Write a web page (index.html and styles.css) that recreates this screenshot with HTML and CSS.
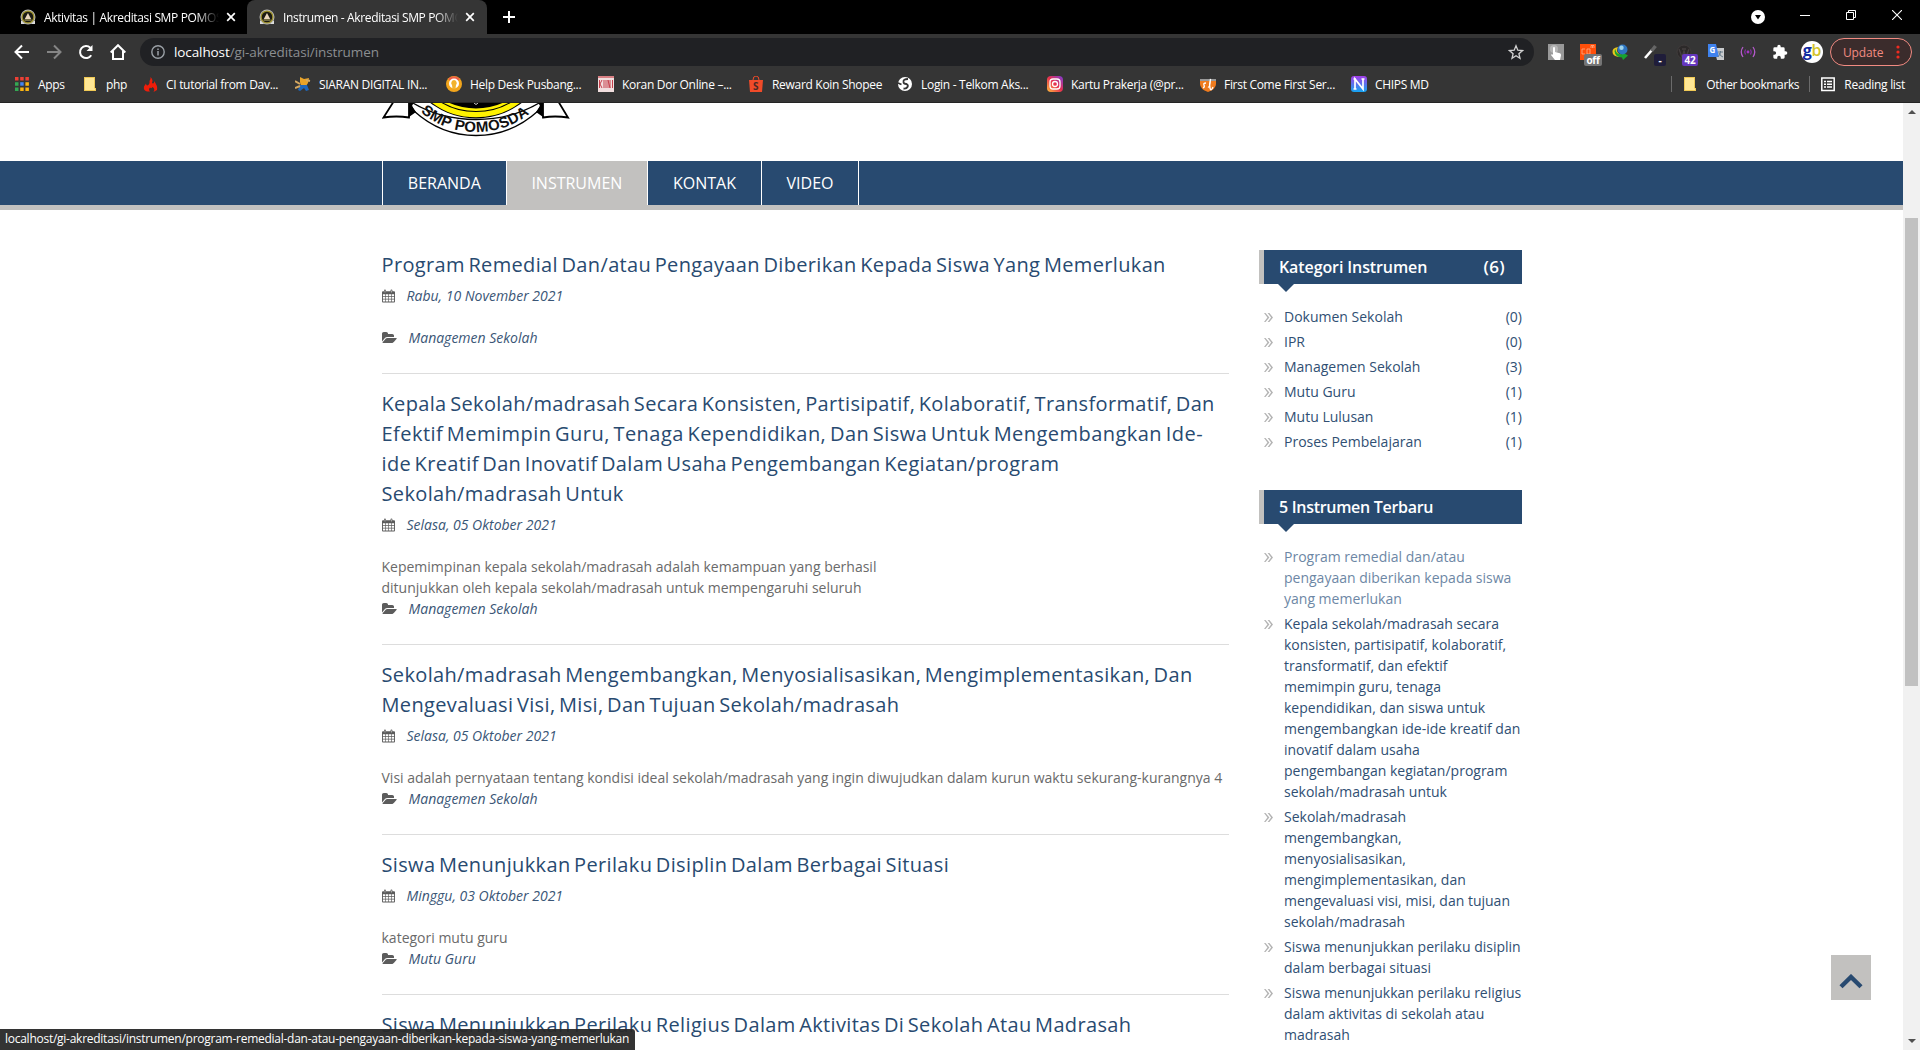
FILE: index.html
```html
<!DOCTYPE html>
<html lang="id">
<head>
<meta charset="utf-8">
<title>Instrumen - Akreditasi SMP POMOSDA</title>
<link rel="stylesheet" href="styles.css">
</head>
<body>
<svg class="defs" aria-hidden="true">
  <symbol id="calendar" viewBox="0 0 14 14"><path fill="#5c5c5c" fill-rule="evenodd" d="M1 2h1.2V.9Q2.2 0 3.2 0t1 .9V2h5V.9q0-.9 1-.9t1 .9V2H13q1 0 1 1v10q0 1-1 1H1q-1 0-1-1V3q0-1 1-1zM1 5v2h2.300V5zm3 0v2h2.600V5zm3.300 0v2h2.600V5zm3.300 0v2H13V5zM1 7.700V10h2.300V7.700zm3 0V10h2.600V7.700zm3.300 0V10h2.600V7.700zm3.300 0V10H13V7.700zM1 10.700V13h2.300v-2.300zm3 0V13h2.600v-2.300zm3.300 0V13h2.600v-2.300zm3.300 0V13H13v-2.300z"/><path d="M3.200 1v2.200M10.200 1v2.200" stroke="#ddd" stroke-width=".7"/></symbol>
  <symbol id="folder" viewBox="0 128 1920 1536"><path fill="#5c5c5c" d="M1879 952q0 31-31 66l-336 396q-43 51-120.500 86.500t-143.500 35.500h-1088q-34 0-60.500-13t-26.500-43q0-31 31-66l336-396q43-51 120.500-86.500t143.500-35.500h1088q34 0 60.500 13t26.500 43zm-343-344v160h-832q-94 0-197 47.500t-164 119.500l-337 396-5 6q0-4-.5-12.500t-.5-12.500v-960q0-92 66-158t158-66h320q92 0 158 66t66 158v32h544q92 0 158 66t66 158z"/></symbol>
  <symbol id="crest" viewBox="0 0 16 16"><path d="M1 12l2-1 2 4H1zM15 12l-2-1-2 4h4z" fill="#ddd"/><circle cx="8" cy="8" r="7.500" fill="#bbb"/><circle cx="8" cy="8" r="5.900" fill="#1b1a12" stroke="#9b8f2c" stroke-width="1.300"/><path d="M8 4l3.200 6H4.800z" fill="#e9d6bd"/><path d="M4.500 11h7" stroke="#c9bd74"/></symbol>
  <symbol id="note" viewBox="0 0 16 16"><path d="M2 1h11v11h1v3H2z" fill="#f0c955"/><path d="M3 2h9v10l1 1v1H3z" fill="#ffe794"/></symbol>
  <symbol id="close" viewBox="0 0 10 10"><path d="M1.200 1.200l7.600 7.600M8.800 1.200L1.200 8.800" stroke="currentColor" stroke-width="1.700"/></symbol>
</svg>

<header class="browser">
  <div class="tabstrip">
    <div class="tab"><svg class="i16"><use href="#crest"/></svg><span class="tab-title">Aktivitas | Akreditasi SMP POMOSDA</span><svg class="i10"><use href="#close"/></svg></div>
    <div class="tab active"><svg class="i16"><use href="#crest"/></svg><span class="tab-title">Instrumen - Akreditasi SMP POMOSDA</span><svg class="i10"><use href="#close"/></svg></div>
    <svg class="newtab" viewBox="0 0 12 12"><path d="M6 0v12M0 6h12" stroke="#fff" stroke-width="2"/></svg>
    <div class="window-buttons">
      <svg viewBox="0 0 14 14" class="i14"><circle cx="7" cy="7" r="7" fill="#fff"/><path d="M4 5h6L7 9.500z" fill="#000"/></svg>
      <svg viewBox="0 0 10 10"><path d="M0 5.500h10" stroke="#fff"/></svg>
      <svg viewBox="0 0 10 10"><path d="M.5 2.500h7v7h-7zM2.500 2.500v-2h7v7h-2" fill="none" stroke="#fff"/></svg>
      <svg viewBox="0 0 10 10"><path d="M0 0l10 10M10 0L0 10" stroke="#fff" stroke-width="1.100"/></svg>
    </div>
  </div>
  <div class="toolbar">
    <div class="nav-icons">
      <svg viewBox="0 0 16 16"><path d="M15 8H2M8 1.500L1.500 8 8 14.500" fill="none" stroke="#fff" stroke-width="2"/></svg>
      <svg viewBox="0 0 16 16"><path d="M1 8h13M8 1.500L14.500 8 8 14.500" fill="none" stroke="#858585" stroke-width="2"/></svg>
      <svg viewBox="0 0 16 16"><path d="M13.200 11.200A6 6 0 1 1 12.300 3.800" fill="none" stroke="#fff" stroke-width="2"/><path d="M14.500 1v6h-6z" fill="#fff"/></svg>
      <svg viewBox="0 0 16 16"><path d="M.7 8.500L8 1.200l7.300 7.300M3 7v8h10V7" fill="none" stroke="#fff" stroke-width="2"/></svg>
    </div>
    <div class="omnibox">
      <svg viewBox="0 0 14 14" class="i14"><circle cx="7" cy="7" r="6.200" fill="none" stroke="#9aa0a6" stroke-width="1.400"/><path d="M7 6v4.500M7 3.400v1.500" stroke="#9aa0a6" stroke-width="1.500"/></svg>
      <span class="url"><b>localhost</b>/gi-akreditasi/instrumen</span>
      <svg viewBox="0 0 16 16" class="i16"><path d="M8 1.800l1.800 4.400 4.700.4-3.600 3.100 1.100 4.600L8 11.800l-4 2.500 1.100-4.600-3.600-3.100 4.700-.4z" fill="none" stroke="#d2d2d2" stroke-width="1.300"/></svg>
    </div>
    <div class="extensions">
      <span class="ext"><svg viewBox="0 0 16 16"><path fill="#999" d="M0 0h16v16H0z"/><circle cx="6" cy="5" r="4" fill="#b6b6b6"/><path d="M5 3.500q1-1 2 0V8l5 1.200q1 .5 1 2L12 16H7l-4-5 1-1 1 1z" fill="#fff"/></svg></span>
      <span class="ext"><svg viewBox="0 0 16 16"><path fill="#ff4f0a" d="M0 0h16v16H0z"/><path d="M5 5H2v5h3M7 5v5h3V5zM11 4V1.500h1.500V4m0-2.500H14V4" fill="none" stroke="#ffb08a" stroke-width=".8"/></svg><i class="badge off">off</i></span>
      <span class="ext"><svg viewBox="0 0 16 16"><path d="M6 3Q0 4 .5 8q0 4 6 5l3-2Q3 9 6 3z" fill="#e8c51c"/><path d="M3.500 5q0 5 6 5.500V8l6.500 3.500-5 4.500-1-2.500Q3 13 2.500 7z" fill="#18a32f"/><circle cx="10.500" cy="5.500" r="5" fill="#2d74c0"/><circle cx="9.500" cy="3.700" r="2.200" fill="#9dd2ea"/></svg></span>
      <span class="ext"><svg viewBox="0 0 16 16"><path d="M1 14L8 6" stroke="#fff" stroke-width="2.600"/><path d="M7.500 7l4-5" stroke="#666" stroke-width="3.500"/></svg><i class="badge dash">-</i></span>
      <span class="ext"><svg viewBox="0 0 16 16"><circle cx="8" cy="8" r="7" fill="#2c2929" stroke="#3f3b3b"/><path d="M3 5l3 8 2-6 2 6 3-8M6 5h4" fill="none" stroke="#454040" stroke-width="1.300"/></svg><i class="badge count">42</i></span>
      <span class="ext"><svg viewBox="0 0 16 16"><path fill="#c9cbcd" d="M6 4h10v12H9z"/><path fill="#3f82ee" d="M0 0h8l3 13H0z"/><text x="1.500" y="9" font-size="8" font-weight="700" fill="#fff">G</text><path d="M10 8h5M12.500 7v1q0 3-3 5M11 9q1 3 4 4" stroke="#667b89" fill="none"/></svg></span>
      <span class="ext"><svg viewBox="0 0 16 16"><circle cx="8" cy="8" r="1.400" fill="#a436c4"/><path d="M3 3Q-.5 8 3 13M13 3q3.500 5 0 10" fill="none" stroke="#b45bcb" stroke-width="1.300"/><path d="M5.500 5.500q-1.600 2.500 0 5M10.500 5.500q1.600 2.500 0 5" fill="none" stroke="#8d2bae" stroke-width="1.200"/></svg></span>
      <span class="ext"><svg viewBox="0 0 24 24"><path fill="#fff" d="M20.500 11H19V7a2 2 0 0 0-2-2h-4V3.500a2.500 2.500 0 0 0-5 0V5H4a2 2 0 0 0-2 2v3.800h1.500a2.700 2.700 0 0 1 0 5.400H2V20a2 2 0 0 0 2 2h3.800v-1.500a2.700 2.700 0 0 1 5.400 0V22H17a2 2 0 0 0 2-2v-4h1.500a2.500 2.500 0 0 0 0-5z"/></svg></span>
    </div>
    <span class="avatar"><b>g</b><em>b</em></span>
    <span class="update">Update<svg viewBox="0 0 4 14"><g fill="#f02b20"><circle cx="2" cy="2" r="1.600"/><circle cx="2" cy="7" r="1.600"/><circle cx="2" cy="12" r="1.600"/></g></svg></span>
  </div>
  <nav class="bookmarks">
    <div class="saved">
      <span class="bm"><svg viewBox="0 0 16 16"><path d="M1 1h3.500v3.500H1zM6.200 1h3.500v3.500H6.200zM11.400 1h3.500v3.500h-3.500z" fill="#ee4035"/><path d="M1 6.200h3.500v3.500H1zM1 11.400h3.500v3.500H1z" fill="#34a853"/><path d="M6.200 6.200h3.500v3.500H6.200z" fill="#4285f4"/><path d="M11.400 6.200h3.500v3.500h-3.500zM6.200 11.400h3.500v3.500H6.200zM11.400 11.400h3.500v3.500h-3.500z" fill="#fbb512"/></svg>Apps</span>
      <span class="bm"><svg><use href="#note"/></svg>php</span>
      <span class="bm"><svg viewBox="0 0 16 16"><path fill="#ef1d0a" d="M8.500 1q3 3 1.500 5.500.5 1.500 2 .5V5q4 5 3 9l-3.500 2q2-3-1-5-1 2-2.500.5-2 2 0 4H5q-4-1-3-5l2-3q0 2 1.500 2Q8 8 7.500 5 9 3 8.500 1z"/></svg>CI tutorial from Dav...</span>
      <span class="bm"><svg viewBox="0 0 16 16"><path d="M5 1l4 2 5-1-1 5-2 3H6L5 6z" fill="#e8a329"/><path d="M5 9h7l2 5-3 1-2-3-4 3-2-1z" fill="#1d67bd"/><path d="M0 5l5 3M0 12l5-2M11 4l4 1" stroke="#d4a760" stroke-width="2"/></svg>SIARAN DIGITAL IN...</span>
      <span class="bm"><svg viewBox="0 0 16 16"><circle cx="8" cy="8" r="8" fill="#f2a51c"/><path d="M2 3a8 8 0 0 1 12 0L8 8z" fill="#ee6048"/><circle cx="8" cy="7.500" r="5" fill="#fff"/><path d="M8 4a3 3 0 0 1 2 5l-.5 4h-3L6 9a3 3 0 0 1 2-5z" fill="#f2b32e"/></svg>Help Desk Pusbang...</span>
      <span class="bm"><svg viewBox="0 0 16 16"><path fill="#f1dede" d="M0 0h16v16H0z"/><path d="M0 1h16" stroke="#d98084" stroke-width="2"/><path d="M1.500 4v8M4 4L2 8l2 4M6 4v8M8 4v8M10 12V4l2 8V4M14.500 4v8" stroke="#c5404b" fill="none"/></svg>Koran Dor Online –...</span>
      <span class="bm"><svg viewBox="0 0 16 16"><path d="M1 4h14l-1 12H2z" fill="#f04b29"/><path d="M5 4q0-4 3-4t3 4" fill="none" stroke="#f04b29"/><text x="5" y="14" font-size="10" font-weight="700" fill="#4a2925">S</text></svg>Reward Koin Shopee</span>
      <span class="bm"><svg viewBox="0 0 16 16"><circle cx="8" cy="8" r="7" fill="#fff"/><path d="M11 3Q6 3 6.500 6q0 2 3 2 2 1 1 3t-4 1.500M1 7l3.500 1.500" fill="none" stroke="#333" stroke-width="1.800"/></svg>Login - Telkom Aks...</span>
      <span class="bm"><svg viewBox="0 0 16 16"><defs><linearGradient id="ig" x1="0" y1="1" x2="1" y2="0"><stop stop-color="#ffbf3b"/><stop offset=".5" stop-color="#e8314f"/><stop offset="1" stop-color="#7a3ad8"/></linearGradient></defs><rect width="16" height="16" rx="4" fill="url(#ig)"/><rect x="3" y="3" width="10" height="10" rx="3" fill="none" stroke="#fff" stroke-width="1.300"/><circle cx="8" cy="8" r="2.500" fill="none" stroke="#fff" stroke-width="1.300"/></svg>Kartu Prakerja (@pr...</span>
      <span class="bm"><svg viewBox="0 0 16 16"><path d="M0 5h16v3q0 5-8 8-8-3-8-8z" fill="#ef7b1e"/><path d="M0 4h16" stroke="#ddd" stroke-width="1.200"/><path d="M6 7q-3 0-2 2t-1 3M8 11q2 1 2.500-8Q9 8 10 12t3-1" fill="none" stroke="#fff" stroke-width="1.300"/></svg>First Come First Ser...</span>
      <span class="bm"><svg viewBox="0 0 16 16"><defs><linearGradient id="nb" x2="0" y2="1"><stop stop-color="#a33de8"/><stop offset="1" stop-color="#14a5f1"/></linearGradient></defs><rect width="16" height="16" rx="3" fill="url(#nb)"/><path d="M4 13V3l8 10V3M2.500 3H5M2.500 13h3M10.500 3h3" fill="none" stroke="#fff" stroke-width="1.700"/></svg>CHIPS MD</span>
    </div>
    <div class="side-links">
      <span class="bm other"><svg><use href="#note"/></svg>Other bookmarks</span>
      <span class="bm reading"><svg viewBox="0 0 16 16"><path d="M1.800 2h12.400v12.400H1.800z" fill="none" stroke="#fff" stroke-width="1.500"/><path d="M4 5.500h2M7 5.500h5M4 8.200h2M7 8.200h5M4 11h2M7 11h5" stroke="#fff" stroke-width="1.500"/></svg>Reading list</span>
    </div>
  </nav>
</header>

<div class="viewport">
  <div class="page">
    <div class="masthead">
      <svg class="logo" viewBox="382 103 188 34">
        <ellipse cx="476" cy="43.500" rx="75" ry="75" fill="#000"/>
        <circle cx="476" cy="43.500" r="71.200" fill="none" stroke="#fff200" stroke-width="5.200"/>
        <circle cx="476" cy="43.500" r="66.200" fill="none" stroke="#fff200" stroke-width="2.600"/>
        <path d="M474 103l2 1.500 2-1.500" fill="none" stroke="#fff" stroke-width=".8"/>
        <path d="M408 100Q438 119.500 476 119.500T544 100L538 111Q511 135.500 476 135.500T414 111z" fill="#fff" stroke="#000" stroke-width="1.300"/>
        <path d="M394 101l-10.500 16.500q13-2 25.500 0V101M558 101l10 16.500q-13-2-25 0V101" fill="#fff" stroke="#000" stroke-width="1.800"/>
        <path d="M409 101v16l7-5-4-6 2-4zM543 101v16l-7-5 4-6-2-4z" fill="#000"/>
        <path id="ribbon" d="M419 110.500Q443 132 476 132T533 110.500" fill="none"/>
        <text class="logo-text" textLength="118" lengthAdjust="spacing"><textPath href="#ribbon" startOffset="2">SMP POMOSDA</textPath></text>
      </svg>
    </div>
    <nav class="menu"><a>BERANDA</a><a class="current">INSTRUMEN</a><a>KONTAK</a><a>VIDEO</a></nav>
    <div class="columns">
      <main>
        <article><h2>Program Remedial Dan/atau Pengayaan Diberikan Kepada Siswa Yang Memerlukan</h2>
          <p class="meta date"><svg><use href="#calendar"/></svg>Rabu, 10 November 2021</p>
          <p class="meta cat"><svg><use href="#folder"/></svg>Managemen Sekolah</p></article>
        <article><h2>Kepala Sekolah/madrasah Secara Konsisten, Partisipatif, Kolaboratif, Transformatif, Dan<br><span class="wide">Efektif Memimpin Guru, Tenaga Kependidikan, Dan Siswa Untuk Mengembangkan Ide-</span><br>ide Kreatif Dan Inovatif Dalam Usaha Pengembangan Kegiatan/program<br>Sekolah/madrasah Untuk</h2>
          <p class="meta date"><svg><use href="#calendar"/></svg>Selasa, 05 Oktober 2021</p>
          <p>Kepemimpinan kepala sekolah/madrasah adalah kemampuan yang berhasil<br>ditunjukkan oleh kepala sekolah/madrasah untuk mempengaruhi seluruh</p>
          <p class="meta cat"><svg><use href="#folder"/></svg>Managemen Sekolah</p></article>
        <article><h2>Sekolah/madrasah Mengembangkan, Menyosialisasikan, Mengimplementasikan, Dan<br>Mengevaluasi Visi, Misi, Dan Tujuan Sekolah/madrasah</h2>
          <p class="meta date"><svg><use href="#calendar"/></svg>Selasa, 05 Oktober 2021</p>
          <p>Visi adalah pernyataan tentang kondisi ideal sekolah/madrasah yang ingin diwujudkan dalam kurun waktu sekurang-kurangnya 4</p>
          <p class="meta cat"><svg><use href="#folder"/></svg>Managemen Sekolah</p></article>
        <article><h2>Siswa Menunjukkan Perilaku Disiplin Dalam Berbagai Situasi</h2>
          <p class="meta date"><svg><use href="#calendar"/></svg>Minggu, 03 Oktober 2021</p>
          <p>kategori mutu guru</p>
          <p class="meta cat"><svg><use href="#folder"/></svg>Mutu Guru</p></article>
        <article><h2>Siswa Menunjukkan Perilaku Religius Dalam Aktivitas Di Sekolah Atau Madrasah</h2></article>
      </main>
      <aside>
        <section class="widget"><h3>Kategori Instrumen <span>(6)</span></h3>
          <ul>
            <li>Dokumen Sekolah<span>(0)</span></li><li>IPR<span>(0)</span></li><li>Managemen Sekolah<span>(3)</span></li><li>Mutu Guru<span>(1)</span></li><li>Mutu Lulusan<span>(1)</span></li><li>Proses Pembelajaran<span>(1)</span></li>
          </ul></section>
        <section class="widget"><h3 class="tight">5 Instrumen Terbaru</h3>
          <ul>
            <li class="hover">Program remedial dan/atau<br>pengayaan diberikan kepada siswa<br>yang memerlukan</li>
            <li>Kepala sekolah/madrasah secara<br>konsisten, partisipatif, kolaboratif,<br>transformatif, dan efektif<br>memimpin guru, tenaga<br>kependidikan, dan siswa untuk<br>mengembangkan ide-ide kreatif dan<br>inovatif dalam usaha<br>pengembangan kegiatan/program<br>sekolah/madrasah untuk</li>
            <li>Sekolah/madrasah<br>mengembangkan,<br>menyosialisasikan,<br>mengimplementasikan, dan<br>mengevaluasi visi, misi, dan tujuan<br>sekolah/madrasah</li>
            <li>Siswa menunjukkan perilaku disiplin<br>dalam berbagai situasi</li>
            <li>Siswa menunjukkan perilaku religius<br>dalam aktivitas di sekolah atau<br>madrasah</li>
          </ul></section>
      </aside>
    </div>
  </div>
  <div class="scrollbar"><svg viewBox="0 0 8 4"><path d="M0 4l4-4 4 4z" fill="#505050"/></svg><div class="thumb"></div><svg class="down" viewBox="0 0 8 4"><path d="M0 0l4 4 4-4z" fill="#505050"/></svg></div>
</div>
<div class="to-top"><svg viewBox="0 0 24 15"><path d="M2 12.800L12 3l10 9.800" fill="none" stroke="#284a70" stroke-width="4.400"/></svg></div>
<div class="status">localhost/gi-akreditasi/instrumen/program-remedial-dan-atau-pengayaan-diberikan-kepada-siswa-yang-memerlukan</div>
</body>
</html>
```
FILE: styles.css
```css
* { box-sizing: border-box; }
html, body { height: 100%; }
body { margin: 0; overflow: hidden; display: flex; flex-direction: column; background: #fff; font: 14px/21px "Open Sans", "Noto Sans", sans-serif; color: #6a6a6a; }
h2, h3, p, ul { margin: 0; padding: 0; }
svg { flex: none; display: block; }
.defs { position: absolute; width: 0; height: 0; }
.i16 { width: 16px; height: 16px; }
.i14 { width: 14px; height: 14px; }
.i10 { width: 10px; height: 10px; }

/* browser frame */
.browser { flex: none; height: 103px; background: #353535; border-bottom: 1px solid #242424; color: #fff; font-size: 12px; letter-spacing: -.3px; }
.tabstrip { height: 34px; background: #000; display: flex; align-items: center; }
.tab { width: 247px; height: 34px; display: flex; align-items: center; padding: 0 11px 0 20px; gap: 7px; }
.tab.active { width: 240px; padding-left: 12px; background: #353535; border-radius: 8px 8px 0 0; }
.tab-title { width: 176px; padding-left: 1px; letter-spacing: -.35px; overflow: hidden; white-space: nowrap; mask-image: linear-gradient(90deg, #000 87%, transparent); }
.newtab { width: 12px; height: 12px; margin-left: 16px; }
.window-buttons { margin-left: auto; padding-right: 18px; display: flex; align-items: center; gap: 36px; }
.window-buttons svg { width: 10px; height: 10px; margin-bottom: 5px; }
.window-buttons .i14 { width: 14px; height: 14px; margin: 0 -1px 0 0; }
.toolbar { height: 36px; display: flex; align-items: center; }
.nav-icons { width: 140px; padding-left: 14px; display: flex; gap: 16px; }
.nav-icons svg { width: 16px; height: 16px; }
.omnibox { width: 1394px; height: 28px; border-radius: 14px; background: #202124; display: flex; align-items: center; padding: 0 10px 0 11px; }
.url { flex: 1; margin-left: 9px; font-size: 13.5px; letter-spacing: -.1px; color: #8b8e91; }
.url b { font-weight: 400; color: #fff; }
.extensions { display: flex; gap: 16px; margin-left: 14px; }
.ext { position: relative; width: 16px; height: 16px; }
.ext svg { width: 16px; height: 16px; }
.badge { position: absolute; left: 4px; top: 10px; height: 12px; line-height: 12px; font-size: 10px; font-style: normal; font-weight: 700; text-align: center; border-radius: 2px; }
.off { width: 18px; background: #757575; }
.dash { width: 12px; left: 10px; background: #1f1d3a; }
.count { width: 16px; left: 6px; background: #6437bd; }
.avatar { width: 22px; height: 22px; margin-left: 13px; border-radius: 50%; background: #fff; display: flex; justify-content: center; font-size: 16px; line-height: 18px; }
.avatar b { color: #102aa0; }
.avatar em { color: #d3c52c; font-style: normal; font-weight: 600; }
.update { width: 82px; height: 28px; margin-left: 7px; border: 1px solid #f28b82; border-radius: 14px; background: #3b2c2c; color: #f28b82; display: flex; align-items: center; justify-content: space-between; padding: 0 11px 0 12px; letter-spacing: -.15px; }
.update svg { width: 4px; height: 14px; }
.bookmarks { display: flex; justify-content: space-between; height: 28px; align-items: center; padding: 0 14px; }
.saved { display: grid; grid-template-columns: 68px 60px 153px 151px 152px 150px 149px 150px 153px 151px auto; }
.bm { display: flex; align-items: center; gap: 8px; white-space: nowrap; }
.bm svg { width: 16px; height: 16px; }
.side-links { display: flex; }
.other, .reading { border-left: 1px solid #6b6b6b; height: 16px; }
.other { width: 138px; padding-left: 10px; letter-spacing: -.38px; }
.reading { padding-left: 10px; margin-right: 1px; }

/* site */
.viewport { flex: 1; min-height: 0; display: flex; }
.page { flex: 1; min-width: 0; overflow: hidden; }
.masthead { height: 58px; padding-left: 382px; }
.logo { width: 188px; height: 34px; }
.logo-text { font: 700 15px "Liberation Sans", Arial, sans-serif; fill: #111; }
.menu { height: 49px; background: #284a70; border-bottom: 5px solid #c2c1bf; padding-left: 382px; display: flex; }
.menu a { height: 44px; padding: 0 24.800px; border-right: 1px solid #fff; color: #fff; font-size: 16px; line-height: 44px; }
.menu a:first-child { border-left: 1px solid #fff; }
.menu .current { background: #c2c1bf; }
.columns { width: 1140.500px; margin: 40px 0 0 381.500px; display: flex; justify-content: space-between; }
main { width: 847.500px; }
article { border-bottom: 1px solid #ddd; margin-bottom: 15px; padding-bottom: 25px; }
h2 { font-size: 20px; line-height: 30px; font-weight: 400; letter-spacing: .35px; word-spacing: -2px; color: #284a70; white-space: nowrap; }
.wide { letter-spacing: .46px; }
article p { white-space: nowrap; }
.meta { display: flex; align-items: center; font-style: italic; color: #3a5676; }
.date { margin: 5px 0 21px; }
.date svg { width: 13px; height: 14px; margin-right: 12px; }
.cat svg { width: 15px; height: 12px; margin-right: 12px; }
aside { width: 263px; }
.widget { margin-bottom: 38px; }
h3 { position: relative; height: 34px; margin-bottom: 22px; padding: 0 17px 0 15px; border-left: 5px solid #c2c1bf; background: #284a70; color: #fff; font-size: 16px; line-height: 34px; font-weight: 600; letter-spacing: -.1px; display: flex; justify-content: space-between; }
h3.tight { letter-spacing: -.3px; }
h3 span { font-size: 17px; letter-spacing: .3px; }
h3::after { content: ""; position: absolute; left: 14px; top: 34px; border: 8px solid transparent; border-top-color: #284a70; border-bottom: 0; }
ul { list-style: none; }
li { position: relative; padding-left: 25px; margin-bottom: 4px; color: #304f73; white-space: nowrap; display: block; }
li::before { content: ""; position: absolute; left: 5px; top: 7px; width: 9px; height: 9px; background: #b4b4b4; clip-path: polygon(0 0, 17% 0, 60% 50%, 17% 100%, 0 100%, 38% 50%, 0 0, 40% 0, 60% 0, 100% 50%, 60% 100%, 40% 100%, 79% 50%, 40% 0); }
li span { float: right; }
.hover { color: #6d87a5; }
.scrollbar { width: 17px; background: #f1f1f1; display: flex; flex-direction: column; align-items: center; padding: 7px 0 7px; }
.scrollbar svg { width: 8px; height: 4px; }
.thumb { width: 13px; height: 468px; margin-top: 104px; background: #c1c1c1; }
.down { margin-top: auto; }
.to-top { position: absolute; left: 1831px; top: 955px; width: 40px; height: 45px; background: #c2c1bf; display: flex; align-items: center; justify-content: center; padding-top: 7px; }
.to-top svg { width: 24px; height: 15px; }
.status { position: absolute; left: 0; bottom: 0; width: 635px; height: 21px; padding-left: 5px; background: rgba(40, 40, 40, .95); border-top-right-radius: 3px; color: #fff; font-size: 12px; line-height: 20px; letter-spacing: -.26px; white-space: nowrap; }
```
